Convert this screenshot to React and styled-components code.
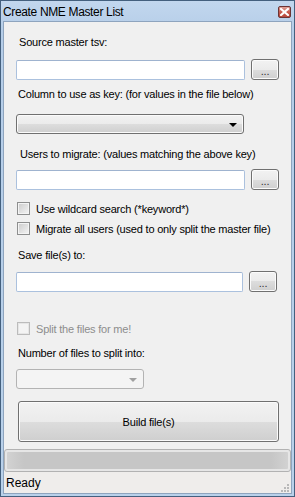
import styled, { createGlobalStyle } from "styled-components"

const Global = createGlobalStyle`
  html, body { margin: 0; padding: 0; background: #b9d1ea; }
  body { font-family: "Liberation Sans", Arial, sans-serif; font-size: 11px; color: #000; }
`

export default function App() {
  return (
    <>
      <Global />
      <Window>
        <TitleBar>
          <Title>Create NME Master List</Title>
          <CloseBtn>
            <svg width="9" height="8" viewBox="0 0 9 8">
              <path d="M1 1 L8 7 M8 1 L1 7" stroke="#fff" strokeWidth="2.2" strokeLinecap="square" />
            </svg>
          </CloseBtn>
        </TitleBar>
        <Client>
          <Form>
            <Label $top={13} $indent={3}>Source master tsv:</Label>
            <Row $top={10}>
              <TextBox $width={229} />
              <Browse>...</Browse>
            </Row>
            <Label $top={7} $indent={2}>Column to use as key: (for values in the file below)</Label>
            <Combo $top={13} $width={228}>
              <Arrow />
            </Combo>
            <Label $top={13} $indent={4}>Users to migrate: (values matching the above key)</Label>
            <Row $top={8}>
              <TextBox $width={229} />
              <Browse>...</Browse>
            </Row>
            <Check $top={12}>
              <Box />
              <span>Use wildcard search (*keyword*)</span>
            </Check>
            <Check $top={7}>
              <Box />
              <span>Migrate all users (used to only split the master file)</span>
            </Check>
            <Label $top={13} $indent={2}>Save file(s) to:</Label>
            <Row $top={9}>
              <TextBox $width={227} />
              <Browse>...</Browse>
            </Row>
            <Check $top={30} $disabled>
              <Box $disabled />
              <span>Split the files for me!</span>
            </Check>
            <Label $top={11} $indent={2}>Number of files to split into:</Label>
            <Combo $top={9} $width={128} $disabled>
              <Arrow $disabled />
            </Combo>
            <BuildButton>Build file(s)</BuildButton>
          </Form>
          <Progress>
            <ProgressInner />
          </Progress>
          <StatusStrip>
            <span>Ready</span>
            <Grip>
              <svg width="10" height="10" viewBox="0 0 10 10">
                {[[7, 1], [7, 4], [4, 4], [7, 7], [4, 7], [1, 7]].map(([x, y]) => (
                  <rect key={x + "-" + y} x={x} y={y} width="2" height="2" fill="#b8b8b8" />
                ))}
              </svg>
            </Grip>
          </StatusStrip>
        </Client>
      </Window>
    </>
  )
}

const Window = styled.div`
  width: 295px;
  height: 497px;
  box-sizing: border-box;
  border: 1px solid #44607e;
  background: linear-gradient(#c2d7ee, #b5cde8 30px, #b9d1ea);
  display: flex;
  flex-direction: column;
`

const TitleBar = styled.div`
  height: 20px;
  display: flex;
  align-items: center;
  justify-content: space-between;
  padding: 0 3px 0 2px;
`

const Title = styled.div`
  font-family: "Liberation Sans", Arial, sans-serif;
  font-size: 12px;
  letter-spacing: -0.35px;
  color: #000;
  margin-top: 1px;
`

const CloseBtn = styled.div`
  width: 13px;
  height: 12px;
  box-sizing: border-box;
  border: 1px solid #6b3434;
  border-radius: 2px;
  background: linear-gradient(#e0a49b, #c75a4d 50%, #b84a3e);
  display: flex;
  align-items: center;
  justify-content: center;
  margin-top: 2px;
`

const Client = styled.div`
  flex: 1;
  margin: 0 2px 2px 2px;
  border: 1px solid #8ea4be;
  background: #f0f0f0;
  display: flex;
  flex-direction: column;
`

const Form = styled.div`
  flex: 1;
  padding-left: 12px;
  display: flex;
  flex-direction: column;
  align-items: flex-start;
  font-size: 11px;
  letter-spacing: -0.2px;
`

const Label = styled.div`
  margin-top: ${p => p.$top}px;
  padding-left: ${p => p.$indent || 0}px;
  line-height: 14px;
  white-space: nowrap;
`

const Row = styled.div`
  margin-top: ${p => p.$top}px;
  display: flex;
  align-items: flex-start;
  gap: 6px;
`

const TextBox = styled.div`
  width: ${p => p.$width}px;
  height: 20px;
  margin-top: 1px;
  box-sizing: border-box;
  background: #fff;
  border: 1px solid #abc1de;
  border-top-color: #9fb3cf;
  border-radius: 2px;
`

const Browse = styled.div`
  width: 28px;
  height: 21px;
  box-sizing: border-box;
  border: 1px solid #707070;
  border-radius: 3px;
  background: linear-gradient(#f2f2f2, #ebebeb 50%, #dddddd 50%, #cfcfcf);
  box-shadow: inset 0 0 0 1px #fbfbfb;
  display: flex;
  align-items: center;
  justify-content: center;
  line-height: 10px;
  padding-top: 2px;
  color: #333;
`

const Combo = styled.div`
  margin-top: ${p => p.$top}px;
  width: ${p => p.$width}px;
  height: 20px;
  box-sizing: border-box;
  border: 1px solid ${p => (p.$disabled ? "#b3b3b3" : "#707070")};
  border-radius: 3px;
  background: ${p =>
    p.$disabled ? "#f4f4f4" : "linear-gradient(#f2f2f2, #ebebeb 50%, #dddddd 50%, #cfcfcf)"};
  box-shadow: inset 0 0 0 1px ${p => (p.$disabled ? "#f4f4f4" : "#fbfbfb")};
  display: flex;
  align-items: center;
  justify-content: flex-end;
  padding-right: 6px;
`

const Arrow = styled.div`
  width: 0;
  height: 0;
  border-left: 4px solid transparent;
  border-right: 4px solid transparent;
  border-top: 4px solid ${p => (p.$disabled ? "#a0a0a0" : "#000")};
  margin-top: 1px;
`

const Check = styled.div`
  margin-top: ${p => p.$top}px;
  display: flex;
  align-items: center;
  gap: 6px;
  height: 13px;
  white-space: nowrap;
  color: ${p => (p.$disabled ? "#8d8d8d" : "#000")};
  padding-left: 1px;
`

const Box = styled.div`
  width: 13px;
  height: 13px;
  box-sizing: border-box;
  border: 1px solid ${p => (p.$disabled ? "#bcbcbc" : "#8e8f8f")};
  background: ${p =>
    p.$disabled ? "#f4f4f4" : "linear-gradient(135deg, #cbcbcb, #f5f5f5)"};
  box-shadow: inset 0 0 0 1px ${p => (p.$disabled ? "#e6e6e6" : "#f4f4f4")};
`

const BuildButton = styled.div`
  margin-top: 12px;
  margin-left: 2px;
  width: 261px;
  height: 41px;
  box-sizing: border-box;
  border: 1px solid #707070;
  border-radius: 3px;
  background: linear-gradient(#f2f2f2, #ebebeb 50%, #dddddd 50%, #cfcfcf);
  box-shadow: inset 0 0 0 1px #fbfbfb;
  display: flex;
  align-items: center;
  justify-content: center;
`

const Progress = styled.div`
  height: 23px;
  box-sizing: border-box;
  border: 1px solid #b2b2b2;
  border-radius: 3px;
  background: #e6e6e6;
  padding: 2px;
`

const ProgressInner = styled.div`
  height: 100%;
  border-radius: 1px;
  background: linear-gradient(90deg, #d2d2d2, #c6c6c6 6%, #c6c6c6 94%, #d2d2d2);
`

const StatusStrip = styled.div`
  height: 21px;
  background: #efedeb;
  display: flex;
  align-items: center;
  justify-content: space-between;
  padding-left: 2px;
  font-size: 12px;
`

const Grip = styled.div`
  align-self: flex-end;
  width: 10px;
  height: 10px;
  margin: 0 1px 1px 0;
`
